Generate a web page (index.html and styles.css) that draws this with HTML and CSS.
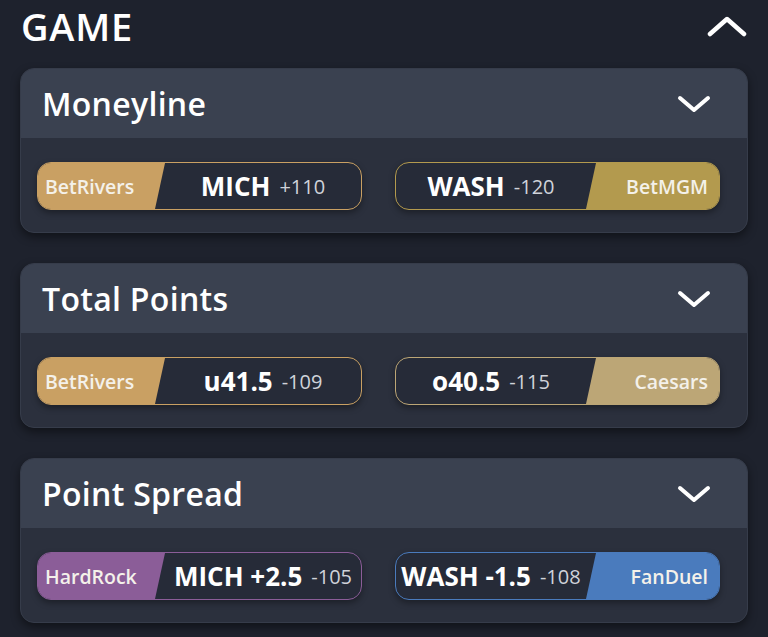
FILE: index.html
```html
<!DOCTYPE html>
<html lang="en">
<head>
    <meta charset="UTF-8">
    <meta name="viewport" content="width=device-width, initial-scale=1.0">
    <title>Game Odds</title>
    <link rel="stylesheet" href="styles.css">
</head>
<body>
    <header class="section-head">
        <h1>GAME</h1>
        <svg class="chev-up" width="40" height="22" viewBox="0 0 40 22"><path d="M3 19 L20 4 L37 19" fill="none" stroke="#fff" stroke-width="4.5" stroke-linecap="round" stroke-linejoin="round"/></svg>
    </header>

    <main>
        <!-- Moneyline -->
        <section class="market">
            <div class="market-head">
                <h2>Moneyline</h2>
                <svg class="chev" width="34" height="20" viewBox="0 0 34 20"><path d="M3 4 L17 16 L31 4" fill="none" stroke="#fff" stroke-width="4" stroke-linecap="round" stroke-linejoin="round"/></svg>
            </div>
            <div class="market-body">
                <div class="pill gold">
                    <span class="book left">BetRivers</span>
                    <span class="bet"><b>MICH</b> <small>+110</small></span>
                </div>
                <div class="pill mgm">
                    <span class="bet"><b>WASH</b> <small>-120</small></span>
                    <span class="book right">BetMGM</span>
                </div>
            </div>
        </section>

        <!-- Total Points -->
        <section class="market">
            <div class="market-head">
                <h2>Total Points</h2>
                <svg class="chev" width="34" height="20" viewBox="0 0 34 20"><path d="M3 4 L17 16 L31 4" fill="none" stroke="#fff" stroke-width="4" stroke-linecap="round" stroke-linejoin="round"/></svg>
            </div>
            <div class="market-body">
                <div class="pill gold">
                    <span class="book left">BetRivers</span>
                    <span class="bet"><b>u41.5</b> <small>-109</small></span>
                </div>
                <div class="pill caesars">
                    <span class="bet"><b>o40.5</b> <small>-115</small></span>
                    <span class="book right">Caesars</span>
                </div>
            </div>
        </section>

        <!-- Point Spread -->
        <section class="market">
            <div class="market-head">
                <h2>Point Spread</h2>
                <svg class="chev" width="34" height="20" viewBox="0 0 34 20"><path d="M3 4 L17 16 L31 4" fill="none" stroke="#fff" stroke-width="4" stroke-linecap="round" stroke-linejoin="round"/></svg>
            </div>
            <div class="market-body">
                <div class="pill hardrock">
                    <span class="book left">HardRock</span>
                    <span class="bet"><b>MICH +2.5</b> <small>-105</small></span>
                </div>
                <div class="pill fanduel">
                    <span class="bet"><b>WASH -1.5</b> <small>-108</small></span>
                    <span class="book right">FanDuel</span>
                </div>
            </div>
        </section>
    </main>
</body>
</html>
```

FILE: styles.css
```css
/* General Styles */
body {
    font-family: "Open Sans", Lato, sans-serif;
    margin: 0;
    padding: 0 20px;
    background-color: #1e222d;
    color: #fff;
    height: 637px;
    overflow: hidden;
}

.section-head {
    display: flex;
    justify-content: space-between;
    align-items: center;
    height: 68px;
    padding: 0 1px 16px 1px;
    box-sizing: border-box;
}

.section-head h1 {
    margin: 0;
    font-size: 38px;
    font-weight: 600;
    letter-spacing: 0.8px;
}

main {
    display: flex;
    flex-direction: column;
    gap: 30px;
}

.market {
    background: #2b303d;
    border-radius: 14px;
    overflow: hidden;
    box-shadow: 0 4px 10px rgba(0, 0, 0, 0.45);
    border: 1px solid #363c4a;
}

.market-head {
    display: flex;
    justify-content: space-between;
    align-items: center;
    height: 69px;
    padding: 0 36px 0 21px;
    background: #3a4150;
}

.market-head h2 {
    margin: 0;
    font-size: 32px;
    font-weight: 600;
    letter-spacing: 0.3px;
}

.market-body {
    display: grid;
    grid-template-columns: 325px 325px;
    gap: 33px;
    padding: 24px 26px 22px 16px;
}

.pill {
    display: flex;
    height: 48px;
    border: 1.5px solid #c9a063;
    border-radius: 14px;
    overflow: hidden;
    background: #262b38;
    box-sizing: border-box;
    box-shadow: 0 3px 6px rgba(0, 0, 0, 0.35);
}

.book {
    display: flex;
    align-items: center;
    font-size: 19.5px;
    font-weight: 600;
    color: #f4f1ea;
    background: #c9a063;
    flex: none;
}

.book.left {
    width: 120px;
    padding-left: 7px;
    clip-path: polygon(0 0, 100% 0, calc(100% - 10px) 100%, 0 100%);
}

.book.right {
    width: 122px;
    justify-content: flex-end;
    padding-right: 11px;
    clip-path: polygon(10px 0, 100% 0, 100% 100%, 0 100%);
}

.bet {
    flex: 1;
    display: flex;
    align-items: center;
    justify-content: center;
    gap: 9px;
    white-space: nowrap;
}

.bet b {
    font-size: 26px;
    font-weight: 700;
}

.bet small {
    font-size: 20px;
    font-weight: 400;
    color: #d0d3da;
}

.pill.mgm { border-color: #b39a4e; }
.pill.mgm .book { background: #b39a4e; }

.pill.caesars { border-color: #bca676; }
.pill.caesars .book { background: #bca676; }

.pill.hardrock { border-color: #8b5d98; }
.pill.hardrock .book { background: #8b5d98; }

.pill.fanduel { border-color: #4a7bbd; }
.pill.fanduel .book { background: #4a7bbd; }
```
